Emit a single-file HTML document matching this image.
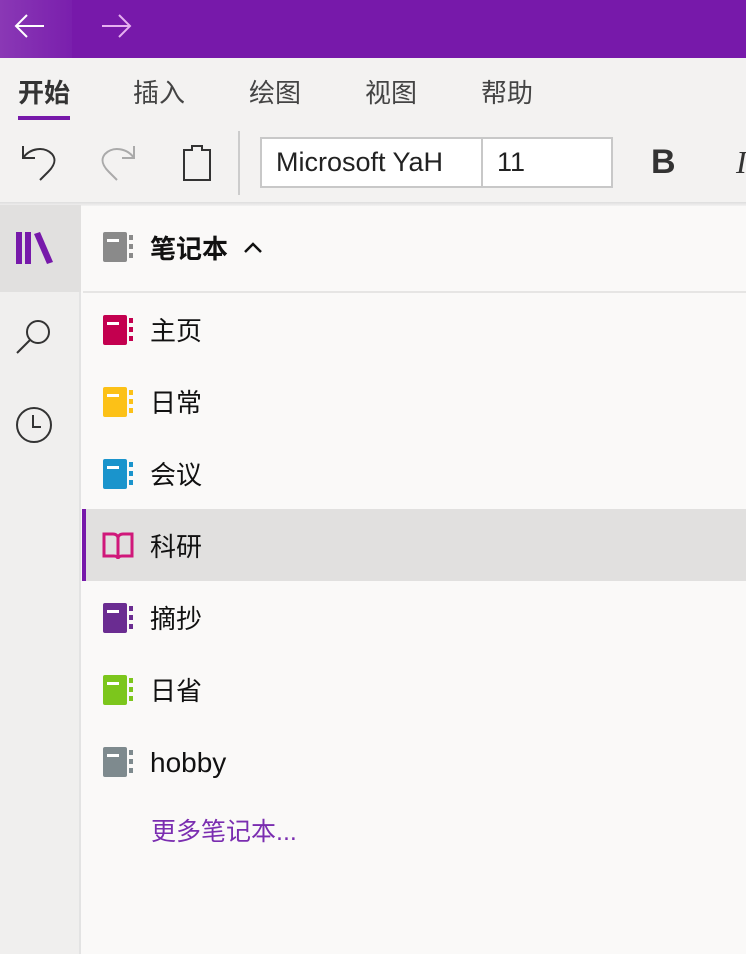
<!DOCTYPE html>
<html><head><meta charset="utf-8"><style>
*{margin:0;padding:0;box-sizing:border-box}
body{width:746px;height:954px;overflow:hidden;background:#faf9f8;font-family:"Liberation Sans","Noto Sans CJK SC",sans-serif;position:relative}
.abs{position:absolute}
.tab{position:absolute;top:76px;font-size:26px;color:#444;line-height:34px}
.item{position:absolute;left:82px;width:664px;height:72px}
.item .t{position:absolute;left:68px;top:19px;font-size:26px;color:#111;line-height:34px}
.item svg{position:absolute;left:21px;top:20px}
</style></head><body>
<div class="abs" style="left:0;top:0;width:746px;height:58px;background:#7719aa"></div>
<div class="abs" style="left:0;top:0;width:72px;height:58px;background:linear-gradient(90deg,#8a38b5,#7a1fad)"></div>
<svg class="abs" style="left:12px;top:12px" width="36" height="28"><path d="M32 14H4M15 3L4 14l11 11" stroke="#fff" stroke-width="2" fill="none"/></svg>
<svg class="abs" style="left:100px;top:12px" width="36" height="28"><path d="M2 14h28M19 3l11 11-11 11" stroke="#e6b0f0" stroke-width="2" fill="none"/></svg>
<div class="abs" style="left:0;top:58px;width:746px;height:146px;background:#f3f2f1"></div>
<div class="tab" style="left:18px;font-weight:bold;color:#333">开始</div>
<div class="abs" style="left:18px;top:116px;width:52px;height:4px;background:#7719aa"></div>
<div class="tab" style="left:133px">插入</div>
<div class="tab" style="left:249px">绘图</div>
<div class="tab" style="left:365px">视图</div>
<div class="tab" style="left:481px">帮助</div>
<svg class="abs" style="left:18px;top:140px" width="40" height="42"><path d="M5 6v12h12M5 18C12 8 26 6 34 14c5 6 2 12-4 18l-8 8" stroke="#333" stroke-width="2" fill="none"/></svg>
<svg class="abs" style="left:100px;top:140px" width="40" height="42"><path d="M34 6v12H22M34 18C27 8 13 6 5 14c-5 6-2 12 4 18l8 8" stroke="#aaa" stroke-width="2" fill="none"/></svg>
<svg class="abs" style="left:182px;top:144px" width="32" height="38"><path d="M2 6h8V2h10v4h8v30H2z" stroke="#333" stroke-width="2" fill="none"/></svg>
<div class="abs" style="left:238px;top:131px;width:2px;height:64px;background:#ccc"></div>
<div class="abs" style="left:260px;top:137px;width:353px;height:51px;background:#fff;border:2px solid #c8c8c8"></div>
<div class="abs" style="left:481px;top:137px;width:2px;height:51px;background:#c8c8c8"></div>
<div class="abs" style="left:276px;top:146px;font-size:27px;color:#222;line-height:32px">Microsoft YaH</div>
<div class="abs" style="left:497px;top:146px;font-size:27px;color:#222;line-height:32px">11</div>
<div class="abs" style="left:651px;top:143px;font-size:34px;font-weight:bold;color:#333;line-height:38px">B</div>
<div class="abs" style="left:736px;top:143px;font-size:32px;font-style:italic;font-family:'Liberation Serif',serif;color:#333;line-height:38px">I</div>
<div class="abs" style="left:0;top:202px;width:746px;height:4px;background:linear-gradient(#ddd,#f3f2f1)"></div>
<div class="abs" style="left:0;top:205px;width:81px;height:749px;background:#f0efee;border-right:2px solid #e3e3e3"></div>
<div class="abs" style="left:0;top:205px;width:81px;height:87px;background:#e1e0df"></div>
<svg class="abs" style="left:15px;top:230px" width="40" height="36"><rect x="1" y="2" width="6" height="32" fill="#7719aa"/><rect x="10" y="2" width="6" height="32" fill="#7719aa"/><path d="M19 4l6-2 13 30-6 2z" fill="#7719aa"/></svg>
<svg class="abs" style="left:14px;top:318px" width="40" height="40"><circle cx="24" cy="14" r="11" stroke="#333" stroke-width="2" fill="none"/><path d="M16 22L3 35" stroke="#333" stroke-width="2"/></svg>
<svg class="abs" style="left:14px;top:405px" width="40" height="40"><circle cx="20" cy="20" r="17" stroke="#333" stroke-width="2" fill="none"/><path d="M19 10v12h8" stroke="#333" stroke-width="2" fill="none"/></svg>
<div class="abs" style="left:83px;top:291px;width:663px;height:2px;background:#e6e5e4"></div>
<svg class="abs" style="left:103px;top:232px" width="32" height="32"><rect x="0" y="0" width="24" height="30" rx="2" fill="#8a8a8a"/><rect x="4" y="7" width="12" height="3" fill="#fff"/><rect x="26" y="3" width="4" height="5" fill="#8a8a8a"/><rect x="26" y="12" width="4" height="5" fill="#8a8a8a"/><rect x="26" y="21" width="4" height="5" fill="#8a8a8a"/></svg>
<div class="abs" style="left:150px;top:232px;font-size:26px;font-weight:bold;color:#111;line-height:34px">笔记本</div>
<svg class="abs" style="left:242px;top:240px" width="22" height="16"><path d="M3 12l8-8 8 8" stroke="#111" stroke-width="2.5" fill="none"/></svg>

<div class="item" style="top:295px"><svg width="32" height="32"><rect width="24" height="30" rx="2" fill="#c3004f"/><rect x="4" y="7" width="12" height="3" fill="#fff"/><rect x="26" y="3" width="4" height="5" fill="#c3004f"/><rect x="26" y="12" width="4" height="5" fill="#c3004f"/><rect x="26" y="21" width="4" height="5" fill="#c3004f"/></svg><div class="t">主页</div></div>
<div class="item" style="top:367px"><svg width="32" height="32"><rect width="24" height="30" rx="2" fill="#fcc117"/><rect x="4" y="7" width="12" height="3" fill="#fff"/><rect x="26" y="3" width="4" height="5" fill="#fcc117"/><rect x="26" y="12" width="4" height="5" fill="#fcc117"/><rect x="26" y="21" width="4" height="5" fill="#fcc117"/></svg><div class="t">日常</div></div>
<div class="item" style="top:439px"><svg width="32" height="32"><rect width="24" height="30" rx="2" fill="#1a94cc"/><rect x="4" y="7" width="12" height="3" fill="#fff"/><rect x="26" y="3" width="4" height="5" fill="#1a94cc"/><rect x="26" y="12" width="4" height="5" fill="#1a94cc"/><rect x="26" y="21" width="4" height="5" fill="#1a94cc"/></svg><div class="t">会议</div></div>
<div class="item" style="top:509px;height:72px;background:#e1e0df"><div class="abs" style="left:0;top:0;width:4px;height:72px;background:#7719aa"></div><svg width="34" height="32" style="top:21px;left:19px"><path d="M3 4h9c3 0 5 2 5 4 0-2 2-4 5-4h9v22H21c-2 0-4 1-4 3 0-2-2-3-4-3H3z" stroke="#d0187a" stroke-width="3" fill="none"/><path d="M17 8v21" stroke="#d0187a" stroke-width="3"/></svg><div class="t" style="top:21px">科研</div></div>
<div class="item" style="top:583px"><svg width="32" height="32"><rect width="24" height="30" rx="2" fill="#6a2c91"/><rect x="4" y="7" width="12" height="3" fill="#fff"/><rect x="26" y="3" width="4" height="5" fill="#6a2c91"/><rect x="26" y="12" width="4" height="5" fill="#6a2c91"/><rect x="26" y="21" width="4" height="5" fill="#6a2c91"/></svg><div class="t">摘抄</div></div>
<div class="item" style="top:655px"><svg width="32" height="32"><rect width="24" height="30" rx="2" fill="#7cc61c"/><rect x="4" y="7" width="12" height="3" fill="#fff"/><rect x="26" y="3" width="4" height="5" fill="#7cc61c"/><rect x="26" y="12" width="4" height="5" fill="#7cc61c"/><rect x="26" y="21" width="4" height="5" fill="#7cc61c"/></svg><div class="t">日省</div></div>
<div class="item" style="top:727px"><svg width="32" height="32"><rect width="24" height="30" rx="2" fill="#7e8a8e"/><rect x="4" y="7" width="12" height="3" fill="#fff"/><rect x="26" y="3" width="4" height="5" fill="#7e8a8e"/><rect x="26" y="12" width="4" height="5" fill="#7e8a8e"/><rect x="26" y="21" width="4" height="5" fill="#7e8a8e"/></svg><div class="t" style="font-size:28px">hobby</div></div>
<div class="abs" style="left:151px;top:815px;font-size:25px;color:#7a2db0;line-height:34px">更多笔记本...</div>
</body></html>
